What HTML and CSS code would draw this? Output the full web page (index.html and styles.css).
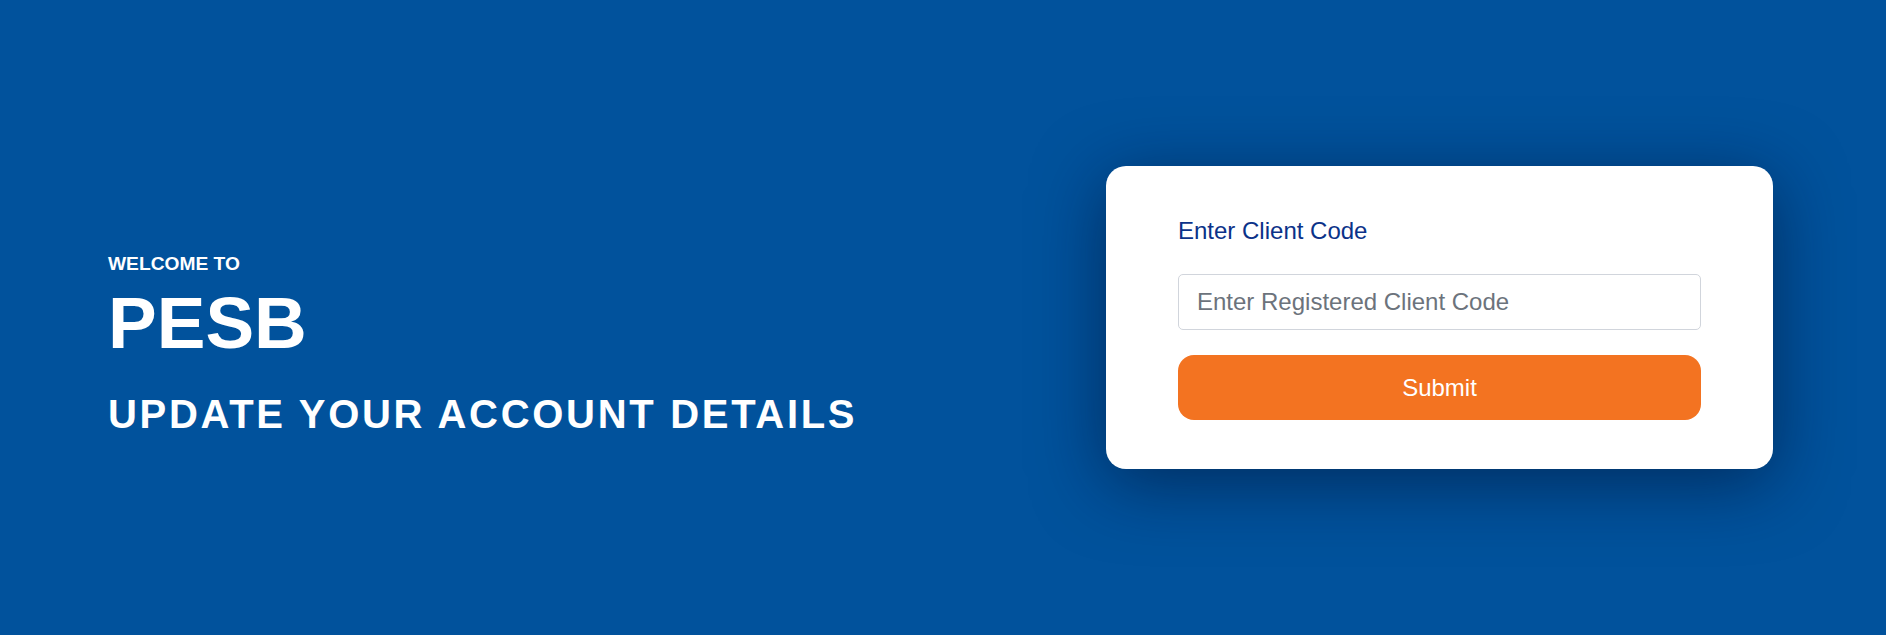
FILE: index.html
```html
<!DOCTYPE html>
<html lang="en">
<head>
<meta charset="utf-8">
<title>PESB - Update Your Account Details</title>
<link rel="stylesheet" href="styles.css">
</head>
<body>
<main class="hero">
  <section class="intro">
    <p class="welcome">WELCOME TO</p>
    <h1 class="brand">PESB</h1>
    <h2 class="tagline">UPDATE YOUR ACCOUNT DETAILS</h2>
  </section>
  <form class="card" onsubmit="return false;">
    <label class="label" for="client-code">Enter Client Code</label>
    <input class="input" id="client-code" type="text" placeholder="Enter Registered Client Code">
    <button class="submit" type="submit">Submit</button>
  </form>
</main>
</body>
</html>
```

FILE: styles.css
```css
* { box-sizing: border-box; }
html, body {
  margin: 0;
  padding: 0;
  background: #01529c;
  font-family: "Liberation Sans", Arial, sans-serif;
}
.hero {
  height: 635px;
  display: flex;
  align-items: center;
  justify-content: space-between;
  padding: 0 113px 0 108px;
}
.intro {
  display: flex;
  flex-direction: column;
  margin-top: 54px;
  color: #ffffff;
}
.welcome {
  margin: 0;
  font-size: 19.2px;
  font-weight: 700;
  line-height: normal;
}
.brand {
  margin: 6px 0 0;
  font-size: 73px;
  font-weight: 700;
  line-height: normal;
}
.tagline {
  margin: 28px 0 0;
  font-size: 40px;
  font-weight: 700;
  letter-spacing: 2.7px;
  line-height: normal;
}
.card {
  width: 667px;
  margin-top: 0;
  background: #ffffff;
  border-radius: 20px;
  padding: 51px 72px 49px;
  display: flex;
  flex-direction: column;
  box-shadow: 0 14px 70px rgba(0, 15, 45, 0.55);
}
.label {
  font-size: 24px;
  color: #0b3289;
  line-height: normal;
}
.input {
  margin-top: 29px;
  height: 56px;
  border: 1px solid #d1d5dc;
  border-radius: 5px;
  padding: 0 18px;
  font-family: "Liberation Sans", Arial, sans-serif;
  font-size: 24px;
  color: #333;
  background: #fff;
  outline: none;
}
.input::placeholder {
  color: #6c737c;
  opacity: 1;
}
.submit {
  margin-top: 25px;
  height: 65px;
  border: none;
  border-radius: 16px;
  background: #f37321;
  color: #ffffff;
  font-family: "Liberation Sans", Arial, sans-serif;
  font-size: 24px;
  cursor: pointer;
}
```
